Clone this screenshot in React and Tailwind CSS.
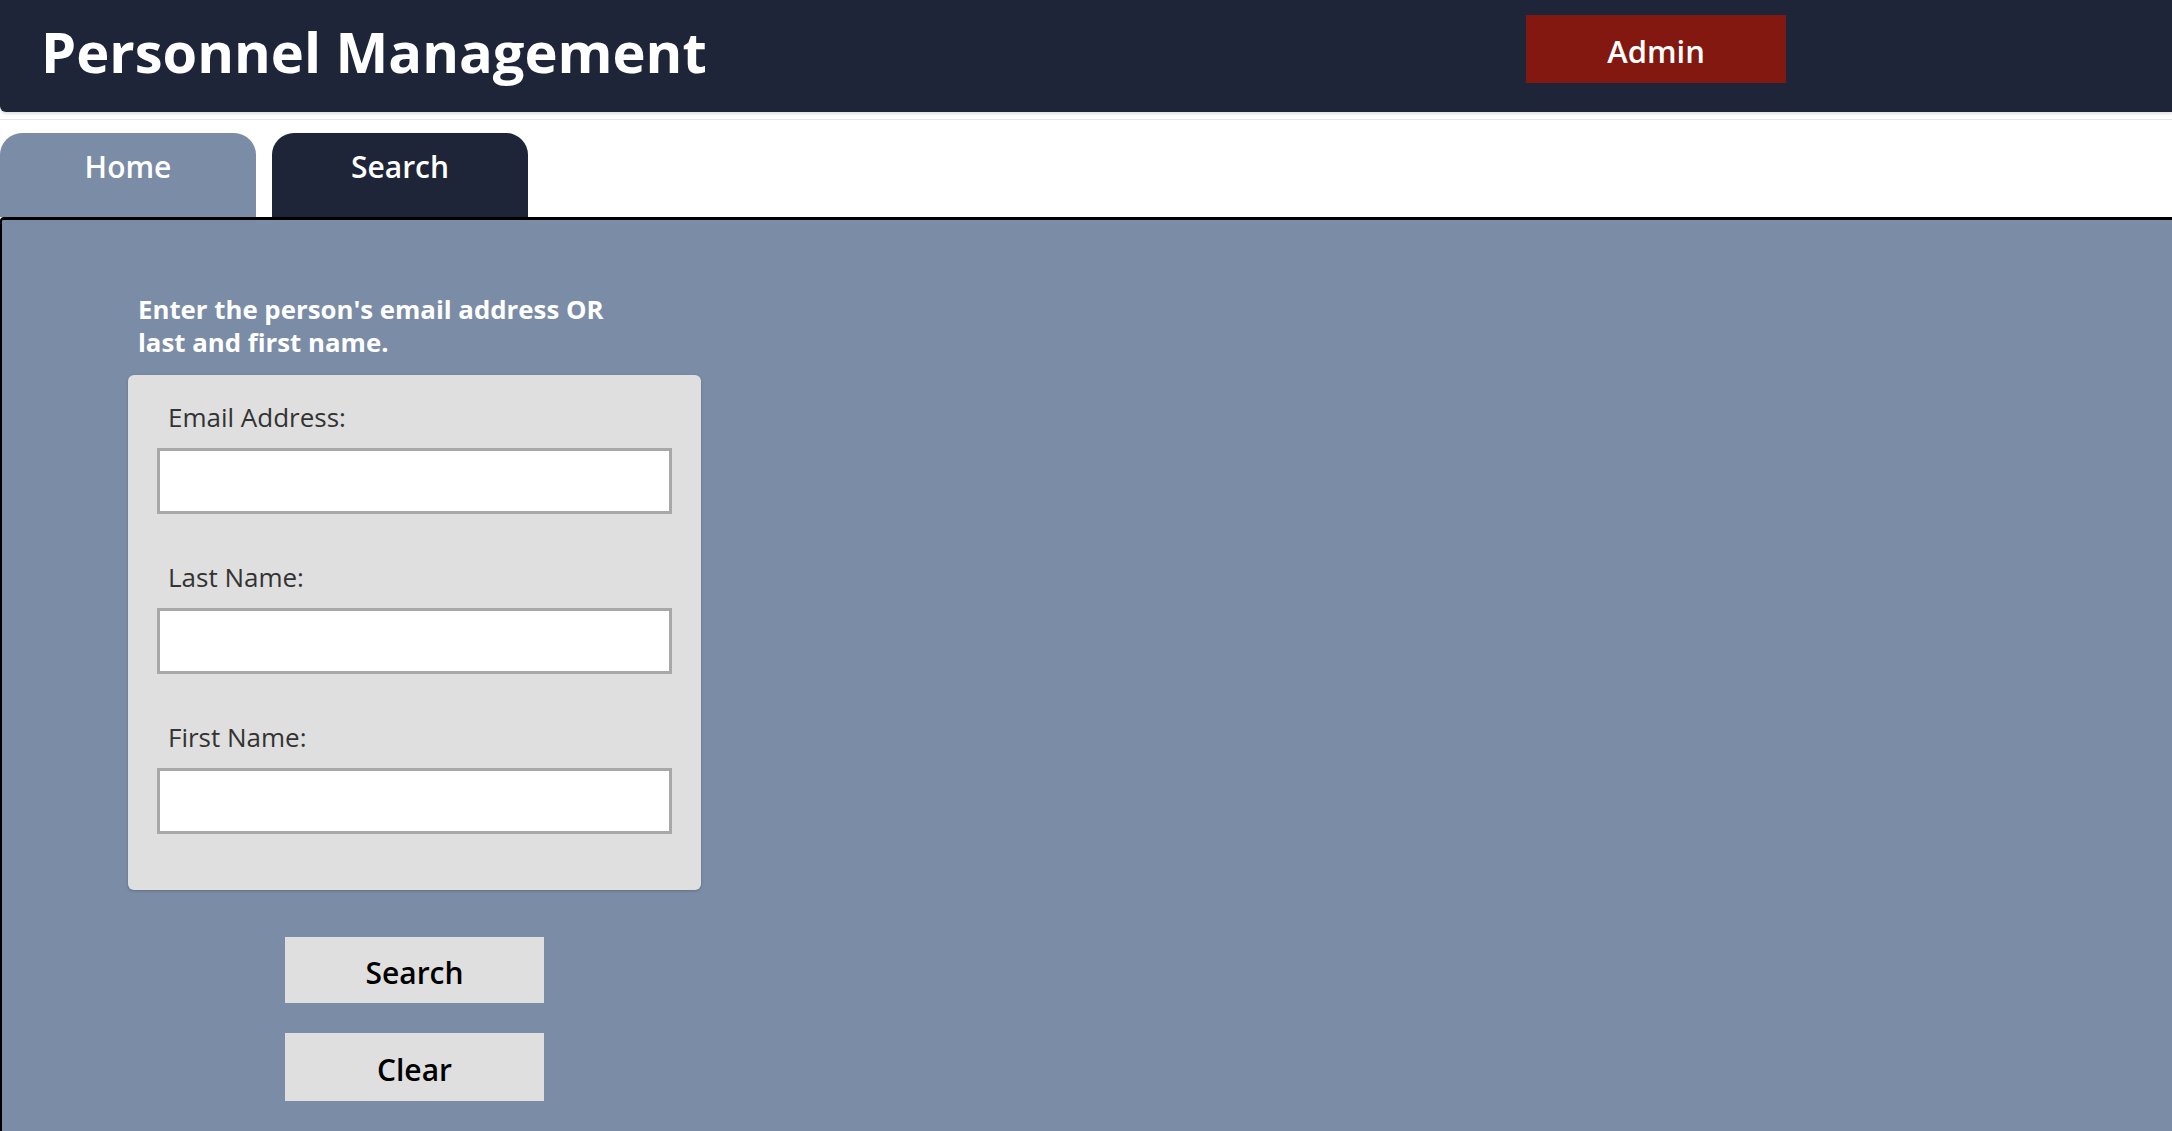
const fields = ["Email Address:", "Last Name:", "First Name:"];

function Field({ label }) {
  return (
    <div className="flex flex-col">
      <label className="ml-[11px] text-[26px] leading-[34px] text-[#333333]">
        {label}
      </label>
      <input
        type="text"
        className="mt-[14px] h-[66px] w-full border-[3px] border-[#a8a8a8] bg-white px-3 text-[22px] outline-none"
      />
    </div>
  );
}

export default function App() {
  return (
    <div className="min-h-screen flex flex-col bg-white font-['Open_Sans',sans-serif]">
      <header className="h-[112px] grid grid-cols-[1526px_260px_1fr] items-start bg-[#1e2539] rounded-bl-md shadow-[0_2px_3px_rgba(0,0,0,0.12)]">
        <h1 className="pl-[41px] pt-[23px] text-[56px] leading-none font-bold text-white whitespace-nowrap">
          Personnel Management
        </h1>
        <button className="mt-[15px] h-[68px] pt-[5px] bg-[#82180f] text-white text-[31px] leading-none font-semibold">
          Admin
        </button>
      </header>

      <div className="mt-[7px] flex-1 flex flex-col border-t border-[#e6e6e6]">
        <nav className="pt-[13px] flex gap-4">
          <button className="w-[256px] h-[84px] pt-[19px] rounded-t-[22px] bg-[#7b8ca6] text-white text-[30px] leading-none font-semibold flex justify-center items-start">
            Home
          </button>
          <button className="w-[256px] h-[84px] pt-[19px] rounded-t-[22px] bg-[#1e2539] text-white text-[30px] leading-none font-semibold flex justify-center items-start">
            Search
          </button>
        </nav>

        <main className="flex-1 bg-[#7b8ca6] border-t-[3px] border-l-2 border-black rounded-tl-[4px] pl-[126px] pt-[73px] pb-10">
          <p className="ml-[10px] text-[25.8px] leading-[33px] font-bold text-white">
            Enter the person's email address OR
            <br />
            last and first name.
          </p>

          <div className="mt-[16px] w-[573px] flex flex-col gap-[46px] bg-[#dfdfdf] rounded-md shadow-[0_1px_3px_rgba(0,0,0,0.2)] px-[29px] pt-[25px] pb-[56px]">
            {fields.map((f) => (
              <Field key={f} label={f} />
            ))}
          </div>

          <div className="mt-[47px] w-[573px] flex flex-col items-center gap-[30px]">
            <button className="w-[259px] h-[66px] pt-[5px] bg-[#dfdfdf] text-black text-[30px] leading-none font-semibold">
              Search
            </button>
            <button className="w-[259px] h-[68px] pt-[5px] bg-[#dfdfdf] text-black text-[30px] leading-none font-semibold">
              Clear
            </button>
          </div>
        </main>
      </div>
    </div>
  );
}
